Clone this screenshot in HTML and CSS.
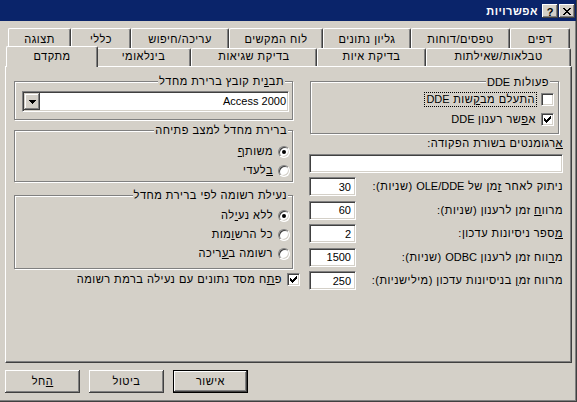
FILE: index.html
```html
<!DOCTYPE html>
<html lang="he" dir="rtl">
<head>
<meta charset="utf-8">
<title>אפשרויות</title>
<link rel="stylesheet" href="styles.css">
</head>
<body>
<div class="window">
  <div class="titlebar">
    <span class="capbtn close"><svg width="8" height="7" viewBox="0 0 8 7" shape-rendering="crispEdges"><path d="M0 0h2v1H0zM6 0h2v1H6zM1 1h2v1H1zM5 1h2v1H5zM2 2h4v1H2zM3 3h2v1H3zM2 4h4v1H2zM1 5h2v1H1zM5 5h2v1H5zM0 6h2v1H0zM6 6h2v1H6z" fill="#000"/></svg></span>
    <span class="capbtn help">?</span>
    <span class="title">אפשרויות</span>
  </div>

  <div class="tabs">
    <div class="tabrow row1">
      <div class="tab t-pages">דפים</div>
      <div class="tab t-forms">טפסים/דוחות</div>
      <div class="tab t-sheet">גליון נתונים</div>
      <div class="tab t-keys">לוח המקשים</div>
      <div class="tab t-edit">עריכה/חיפוש</div>
      <div class="tab t-general">כללי</div>
      <div class="tab t-view">תצוגה</div>
    </div>
    <div class="tabrow row2">
      <div class="tab t-tables">טבלאות/שאילתות</div>
      <div class="tab t-spell">בדיקת איות</div>
      <div class="tab t-errors">בדיקת שגיאות</div>
      <div class="tab t-intl">בינלאומי</div>
      <div class="tab t-adv sel">מתקדם</div>
    </div>
  </div>

  <div class="panel">
    <div class="col col-right">
      <div class="group dde">
        <div class="gtitle">פעולות <span class="lat">DDE</span></div>
        <div class="chk">
          <span class="box"></span>
          <span class="focus">התעלם מב<u>ק</u>שות <span class="lat">DDE</span></span>
        </div>
        <div class="chk">
          <span class="box"><svg width="7" height="7" viewBox="0 0 7 7" shape-rendering="crispEdges"><path d="M6 0h1v3H6zM5 1h1v3H5zM4 2h1v3H4zM3 3h1v3H3zM2 4h1v3H2zM1 3h1v3H1zM0 2h1v3H0z" fill="#000"/></svg></span>
          <span>א<u>פ</u>שר רענון <span class="lat">DDE</span></span>
        </div>
      </div>
      <div class="lbl args"><u>א</u>רגומנטים בשורת הפקודה:</div>
      <div class="edit wide"></div>
      <div class="fields">
        <div class="frow"><span>ניתוק לאחר <u>ז</u>מן של <span class="lat">OLE/DDE</span> (שניות):</span><span class="edit num">30</span></div>
        <div class="frow"><span>מרוו<u>ח</u> זמן לרענון (שניות):</span><span class="edit num">60</span></div>
        <div class="frow"><span><u>מ</u>ספר ניסיונות עדכון:</span><span class="edit num">2</span></div>
        <div class="frow"><span>מ<u>ר</u>ווח זמן לרענון <span class="lat">ODBC</span> (שניות):</span><span class="edit num">1500</span></div>
        <div class="frow"><span>מרווח זמ<u>ן</u> בניסיונות עדכון (מילישניות):</span><span class="edit num">250</span></div>
      </div>
    </div>

    <div class="col col-left">
      <div class="group g1">
        <div class="gtitle">תב<u>נ</u>ית קובץ ברירת מחדל</div>
        <div class="combo">
          <span class="val lat">Access 2000</span>
          <span class="ddbtn"><svg width="7" height="4" viewBox="0 0 7 4" shape-rendering="crispEdges"><path d="M0 0h7v1H0zM1 1h5v1H1zM2 2h3v1H2zM3 3h1v1H3z" fill="#000"/></svg></span>
        </div>
      </div>
      <div class="group g2">
        <div class="gtitle">ברירת מחדל למצב פתיחה</div>
        <div class="radios">
          <div class="radio"><span class="rb on"></span><span>משות<u>ף</u></span></div>
          <div class="radio"><span class="rb"></span><span><u>ב</u>לעדי</span></div>
        </div>
      </div>
      <div class="group g3">
        <div class="gtitle">נעילת רשומה לפי ברירת מחדל</div>
        <div class="radios">
          <div class="radio"><span class="rb on"></span><span>ללא נע<u>י</u>לה</span></div>
          <div class="radio"><span class="rb"></span><span>כל הרש<u>ו</u>מות</span></div>
          <div class="radio"><span class="rb"></span><span>רשומה ב<u>ע</u>ריכה</span></div>
        </div>
      </div>
      <div class="chk rowlock">
        <span class="box"><svg width="7" height="7" viewBox="0 0 7 7" shape-rendering="crispEdges"><path d="M6 0h1v3H6zM5 1h1v3H5zM4 2h1v3H4zM3 3h1v3H3zM2 4h1v3H2zM1 3h1v3H1zM0 2h1v3H0z" fill="#000"/></svg></span>
        <span>פ<u>ת</u>ח מסד נתונים עם נעילה ברמת רשומה</span>
      </div>
    </div>
  </div>

  <div class="buttons">
    <div class="btn default">אישור</div>
    <div class="btn">ביטול</div>
    <div class="btn"><u>ה</u>חל</div>
  </div>
</div>
</body>
</html>
```

FILE: styles.css
```css
* { box-sizing: border-box; }

html, body {
  margin: 0;
  padding: 0;
}

body {
  font-family: "Liberation Sans", "DejaVu Sans", sans-serif;
  font-size: 11px;
  line-height: 13px;
  letter-spacing: 0.5px;
  color: #000;
  background: #d4d0c8;
}

.lat,
.edit.num {
  font-family: "Liberation Sans", Arial, sans-serif;
  letter-spacing: 0;
}

.window {
  width: 577px;
  height: 402px;
  overflow: hidden;
  background: #d4d0c8;
  border-right: 1px solid #404040;
  border-bottom: 1px solid #404040;
  box-shadow: inset -1px -1px 0 #808080;
}

/* title bar */
.titlebar {
  height: 21px;
  background: #0a246a;
  display: flex;
  align-items: flex-start;
  padding: 4px 1px 0 0;
}

.title {
  color: #fff;
  font-weight: bold;
  margin-right: 4px;
  padding-top: 1px;
}

.capbtn {
  width: 16px;
  height: 14px;
  background: #d4d0c8;
  box-shadow: inset -1px -1px 0 #404040, inset 1px 1px 0 #fff,
              inset -2px -2px 0 #808080, inset 2px 2px 0 #d4d0c8;
  display: flex;
  align-items: center;
  justify-content: center;
}

.help {
  margin-right: 1px;
  font-family: "Liberation Sans", Arial, sans-serif;
  font-weight: bold;
  font-size: 11px;
  line-height: 12px;
  padding-top: 1px;
  direction: ltr;
  letter-spacing: 0;
}

/* tabs */
.tabs {
  margin-top: 7px;
}

.tabrow {
  display: flex;
}

.row1 {
  height: 20px;
  padding-right: 6px;
}

.row2 {
  height: 18px;
  padding-right: 5px;
}

.tab {
  background: #d4d0c8;
  border-top: 1px solid #fff;
  border-left: 1px solid #fff;
  border-right: 1px solid #404040;
  box-shadow: inset -1px 0 0 #808080;
  border-radius: 2px 2px 0 0;
  text-align: center;
  white-space: nowrap;
}

.row1 .tab {
  height: 20px;
  padding-top: 4px;
}

.row2 .tab {
  height: 18px;
  padding-top: 1px;
}

.row2 .tab.sel {
  height: 21px;
  margin: -2px -2px -1px -2px;
  padding-top: 3px;
  position: relative;
  z-index: 1;
}

.t-pages   { width: 60px; }
.t-forms   { width: 99px; }
.t-sheet   { width: 88px; }
.t-keys    { width: 94px; }
.t-edit    { width: 98px; }
.t-general { width: 60px; }
.t-view    { width: 63px; }

.t-tables  { width: 145px; }
.t-spell   { width: 109px; }
.t-errors  { width: 126px; }
.t-intl    { width: 95px; }
.t-adv     { width: 92px; }

/* panel */
.panel {
  margin: 0 4px 0 5px;
  height: 297px;
  border-top: 1px solid #fff;
  border-left: 1px solid #fff;
  border-right: 1px solid #404040;
  border-bottom: 1px solid #404040;
  box-shadow: inset -1px -1px 0 #808080;
  display: grid;
  grid-template-columns: 254px 279px;
  column-gap: 16px;
  align-content: start;
  padding: 14px 8px 0 8px;
}

/* group boxes */
.group {
  border: 1px solid #808080;
  box-shadow: 1px 1px 0 #fff, inset 1px 1px 0 #fff;
}

.gtitle {
  width: fit-content;
  margin: -7px 4px 0 0;
  padding: 0 1px;
  background: #d4d0c8;
  line-height: 13px;
  white-space: nowrap;
}

.dde {
  width: 249px;
  margin-right: 4px;
  padding: 1px 4px 4px 0;
}

/* checkboxes */
.chk {
  display: flex;
  align-items: center;
  height: 20px;
  gap: 5px;
  white-space: nowrap;
}

.box {
  flex: none;
  width: 13px;
  height: 13px;
  background: #fff;
  border: 1px solid;
  border-color: #808080 #fff #fff #808080;
  box-shadow: inset 1px 1px 0 #404040, inset -1px -1px 0 #d4d0c8;
  display: flex;
  align-items: center;
  justify-content: center;
}

.focus {
  outline: 1px dotted #000;
  outline-offset: 0;
  padding: 0 1px;
}

.lbl.args {
  margin-top: 3px;
}

/* edits */
.edit {
  display: block;
  background: #fff;
  border: 1px solid;
  border-color: #808080 #fff #fff #808080;
  box-shadow: inset 1px 1px 0 #404040, inset -1px -1px 0 #d4d0c8;
}

.edit.wide {
  height: 19px;
  margin-top: 4px;
}

.fields {
  margin-top: 4px;
  display: flex;
  flex-direction: column;
  gap: 4.5px;
}

.frow {
  display: flex;
  align-items: center;
  justify-content: space-between;
  height: 19px;
  white-space: nowrap;
}

.edit.num {
  width: 47px;
  height: 19px;
  direction: ltr;
  display: flex;
  align-items: center;
  justify-content: flex-end;
  padding: 1px 4px 0 0;
}

/* left column */
.g1 {
  padding: 0 3px 7px 7px;
}

.combo {
  margin-top: 3px;
  height: 21px;
  background: #fff;
  border: 1px solid;
  border-color: #808080 #fff #fff #808080;
  box-shadow: inset 1px 1px 0 #404040, inset -1px -1px 0 #d4d0c8;
  display: flex;
  align-items: center;
  justify-content: space-between;
  padding: 1px;
}

.combo .val {
  padding-right: 1px;
}

.ddbtn {
  width: 16px;
  height: 17px;
  background: #d4d0c8;
  box-shadow: inset -1px -1px 0 #404040, inset 1px 1px 0 #d4d0c8,
              inset -2px -2px 0 #808080, inset 2px 2px 0 #fff;
  display: flex;
  align-items: center;
  justify-content: center;
}

.g2 {
  margin-top: 10px;
  padding-bottom: 1px;
}

.g2 .radios { margin-top: 5px; }

.g3 {
  margin-top: 13px;
  padding-bottom: 5px;
}

.g3 .radios { margin-top: 4px; }

.radio {
  display: flex;
  align-items: center;
  height: 19px;
  gap: 5px;
  padding-right: 2px;
  white-space: nowrap;
}

.rb {
  flex: none;
  width: 12px;
  height: 12px;
  border-radius: 50%;
  background: #fff;
  border: 1px solid;
  border-color: #808080 #fff #fff #808080;
  box-shadow: inset 1px 1px 0 #404040, inset -1px -1px 0 #d4d0c8;
  display: flex;
  align-items: center;
  justify-content: center;
}

.rb.on::after {
  content: "";
  width: 4px;
  height: 4px;
  border-radius: 50%;
  background: #000;
}

.rowlock {
  margin-top: 1px;
  height: 19px;
  margin-right: -7px;
}

/* dialog buttons */
.buttons {
  display: flex;
  justify-content: flex-end;
  gap: 9px;
  padding-left: 5px;
  margin-top: 7px;
}

.btn {
  width: 75px;
  height: 23px;
  background: #d4d0c8;
  box-shadow: inset -1px -1px 0 #404040, inset 1px 1px 0 #fff,
              inset -2px -2px 0 #808080, inset 2px 2px 0 #d4d0c8;
  display: flex;
  align-items: center;
  justify-content: center;
}

.btn.default {
  border: 1px solid #000;
  box-shadow: inset -1px -1px 0 #404040, inset 1px 1px 0 #fff,
              inset -2px -2px 0 #808080;
}
```
